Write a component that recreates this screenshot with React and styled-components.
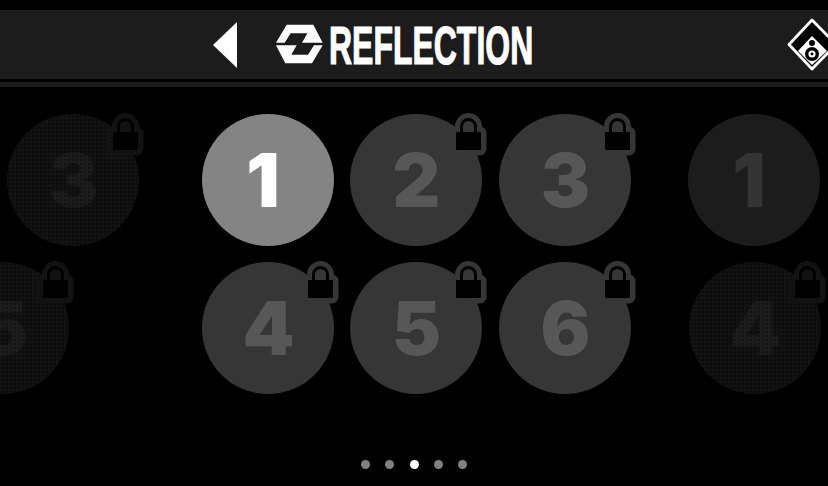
import React from "react";
import styled, { createGlobalStyle } from "styled-components";

const Global = createGlobalStyle`
  html, body { margin: 0; padding: 0; background: #000; }
  body { width: 828px; height: 486px; overflow: hidden; font-family: "Inter", "Liberation Sans", sans-serif; }
`;

const Screen = styled.main`
  width: 828px;
  height: 486px;
  overflow: hidden;
  background: #000;
  padding-top: 10px;
  box-sizing: border-box;
`;

const Header = styled.header`
  height: 69px;
  background: #1c1c1c;
  display: flex;
  align-items: center;
  padding-left: 213px;
  overflow: hidden;
`;

const HeaderStrip = styled.div`
  height: 5px;
  margin-top: 3px;
  background: #1c1c1c;
`;

const BackArrow = styled.svg`
  width: 24px;
  height: 46px;
  margin-top: 1px;
  flex: none;
`;

const Logo = styled.svg`
  width: 56px;
  height: 50px;
  margin-left: 35px;
  flex: none;
`;

const Title = styled.h1`
  margin: 0 0 0 1px;
  width: 204px;
  flex: none;
  font-family: "Liberation Sans", sans-serif;
  font-weight: 700;
  font-size: 54px;
  line-height: 1;
  color: #fff;
  white-space: nowrap;
  transform: scaleX(0.592);
  transform-origin: left center;
  -webkit-text-stroke: 1.2px #fff;
`;

const ModeIcon = styled.svg`
  width: 56px;
  height: 60px;
  margin-left: auto;
  margin-right: -12px;
  flex: none;
`;

const Grid = styled.section`
  margin-top: 27px;
  display: flex;
  flex-direction: column;
  gap: 16px;
`;

const Row = styled.div`
  display: flex;
  height: 132px;
`;

const variants = {
  active: { bg: "#848484", fg: "#ffffff" },
  locked: { bg: "#363636", fg: "#575757" },
  faded: { bg: "#1c1c1c", fg: "#343434" },
  ghost: { bg: "#121212", fg: "#1d1d1d" },
};

const Circle = styled.div`
  position: relative;
  flex: none;
  width: 132px;
  height: 132px;
  margin-left: ${(p) => p.$gap}px;
  border-radius: 50%;
  background: ${(p) => variants[p.$kind].bg};
  color: ${(p) => variants[p.$kind].fg};
  display: flex;
  align-items: center;
  justify-content: center;
  font-family: "Inter", "Liberation Sans", sans-serif;
  font-weight: 900;
  font-size: 74px;
  line-height: 1;
`;

const Digit = styled.span`
  padding-right: ${(p) => (p.$narrow ? 10 : 0)}px;
  padding-left: ${(p) => (p.$narrow ? 0 : 1)}px;
`;

const Dither = styled.span`
  position: absolute;
  inset: 0;
  border-radius: 50%;
  background-image: radial-gradient(circle, rgba(0, 0, 0, 0.4) 0.8px, transparent 1.1px);
  background-size: 4px 4px;
`;

const LockIcon = styled.svg`
  position: absolute;
  left: 105px;
  top: -1px;
  width: 32px;
  height: 43px;
  overflow: visible;
`;

const Pager = styled.nav`
  margin-top: 66px;
  display: flex;
  justify-content: center;
  gap: 15.4px;
`;

const PagerDot = styled.span`
  width: 9px;
  height: 9px;
  border-radius: 50%;
  background: ${(p) => (p.$on ? "#ffffff" : "#808080")};
`;

const Lock = ({ color }) => (
  <LockIcon viewBox="0 0 32 43">
    <path d="M6.5 20V13.5A7 7 0 0 1 20.5 13.5V20" fill={color} stroke={color} strokeWidth="13" />
    <rect x="1" y="19" width="25" height="18" rx="1" fill={color} stroke={color} strokeWidth="11" strokeLinejoin="round" />
    <path d="M6.5 20V13.5A7 7 0 0 1 20.5 13.5V20" fill="none" stroke="#000" strokeWidth="3" />
    <rect x="1" y="19" width="25" height="18" rx="1" fill="#000" />
  </LockIcon>
);

const Tile = ({ n, kind, gap = 16, locked = true }) => (
  <Circle $kind={kind} $gap={gap}>
    <Digit $narrow={n === "1"}>{n}</Digit>
    {kind === "ghost" && <Dither />}
    {locked && <Lock color={variants[kind].bg} />}
  </Circle>
);

export default function App() {
  return (
    <>
      <Global />
      <Screen>
        <Header>
          <BackArrow viewBox="0 0 24 46">
            <path d="M0 23L24 0V46Z" fill="#fff" />
          </BackArrow>
          <Logo viewBox="0 0 168 150">
            <path d="M12 68L44 14H124L152 68H90L106 40H56L38 68Z" fill="#fff" />
            <path d="M152 76L120 130H40L12 76H74L58 104H108L126 76Z" fill="#fff" />
          </Logo>
          <Title>REFLECTION</Title>
          <ModeIcon viewBox="0 0 56 60">
            <path d="M28 5L52 29.5L28 54L5 29.5Z" fill="#000" stroke="#fff" strokeWidth="2.8" strokeLinejoin="round" />
            <path d="M28 21L43 36L28 50L14 36Z" fill="#fff" />
            <circle cx="28" cy="28" r="3" fill="#000" />
            <circle cx="28" cy="39" r="7" fill="#000" />
            <circle cx="28" cy="39" r="3.6" fill="#fff" />
            <circle cx="28" cy="39" r="1.4" fill="#000" />
          </ModeIcon>
        </Header>
        <HeaderStrip />
        <Grid>
          <Row>
            <Tile n="3" kind="ghost" gap={7} />
            <Tile n="1" kind="active" gap={63} locked={false} />
            <Tile n="2" kind="locked" />
            <Tile n="3" kind="locked" gap={17} />
            <Tile n="1" kind="faded" gap={57} locked={false} />
          </Row>
          <Row>
            <Tile n="5" kind="ghost" gap={-63} />
            <Tile n="4" kind="locked" gap={133} />
            <Tile n="5" kind="locked" />
            <Tile n="6" kind="locked" gap={17} />
            <Tile n="4" kind="ghost" gap={58} />
          </Row>
        </Grid>
        <Pager>
          {[0, 1, 2, 3, 4].map((i) => (
            <PagerDot key={i} $on={i === 2} />
          ))}
        </Pager>
      </Screen>
    </>
  );
}
